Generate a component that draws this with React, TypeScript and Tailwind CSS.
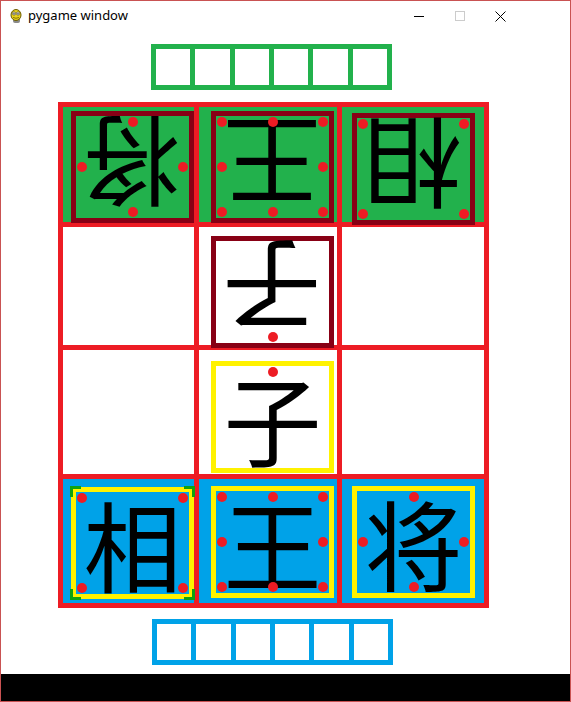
import React from "react";

type Dot = "tl" | "tc" | "tr" | "ml" | "mr" | "bl" | "bc" | "br";

const dotPos: Record<Dot, string> = {
  tl: "top-[1px] left-[1px]",
  tc: "top-[1px] left-1/2 -translate-x-1/2",
  tr: "top-[1px] right-[1px]",
  ml: "top-1/2 -translate-y-1/2 left-[1px]",
  mr: "top-1/2 -translate-y-1/2 right-[1px]",
  bl: "bottom-[1px] left-[1px]",
  bc: "bottom-[1px] left-1/2 -translate-x-1/2",
  br: "bottom-[1px] right-[1px]",
};

const KING: Dot[] = ["tl", "tc", "tr", "ml", "mr", "bl", "bc", "br"];
const BISHOP: Dot[] = ["tl", "tr", "bl", "br"];
const ROOK: Dot[] = ["tc", "ml", "mr", "bc"];

type PieceProps = {
  char: string;
  flipped?: boolean;
  frame: string;
  dots: Dot[];
  offset: string;
  selected?: boolean;
};

const Piece = ({ char, flipped, frame, dots, offset, selected }: PieceProps) => (
  <div className={`relative w-[123px] h-[112px] border-[5px] flex items-center justify-center ${frame} ${offset}`}>
    <span
      className={`text-[98px] leading-[0.85] text-black font-normal ${flipped ? "rotate-180" : ""}`}
      style={{ fontFamily: '"Noto Sans CJK SC", "Noto Sans CJK JP", sans-serif' }}
    >
      {char}
    </span>
    {dots.map((d) => (
      <span key={d} className={`absolute w-[10px] h-[10px] rounded-full bg-[#ed1c24] ${dotPos[d]}`} />
    ))}
    {selected && (
      <>
        <span className="absolute -top-[6px] -left-[6px] w-[11px] h-[11px] border-t-[3px] border-l-[3px] border-[#0fa30f]" />
        <span className="absolute -top-[6px] -right-[6px] w-[11px] h-[11px] border-t-[3px] border-r-[3px] border-[#0fa30f]" />
        <span className="absolute -bottom-[6px] -left-[6px] w-[11px] h-[11px] border-b-[3px] border-l-[3px] border-[#0fa30f]" />
        <span className="absolute -bottom-[6px] -right-[6px] w-[11px] h-[11px] border-b-[3px] border-r-[3px] border-[#0fa30f]" />
      </>
    )}
  </div>
);

const Tray = ({ color, className }: { color: string; className: string }) => (
  <div className={`flex gap-[5px] p-[5px] w-[241px] h-[46px] ${color} ${className}`}>
    {[0, 1, 2, 3, 4, 5].map((i) => (
      <div key={i} className="flex-1 bg-white" />
    ))}
  </div>
);

const PygameIcon = () => (
  <svg width="16" height="16" viewBox="0 0 16 16">
    <rect x="5" y="9" width="7" height="6" rx="2" fill="#8a8a8a" />
    <ellipse cx="8" cy="7" rx="5" ry="5.5" fill="#e8d21a" stroke="#6b5b00" strokeWidth="1" />
    <circle cx="6" cy="5.5" r="1.6" fill="#fff" stroke="#333" strokeWidth="0.6" />
    <circle cx="10" cy="5.5" r="1.6" fill="#fff" stroke="#333" strokeWidth="0.6" />
    <circle cx="6" cy="5.7" r="0.6" fill="#000" />
    <circle cx="10" cy="5.7" r="0.6" fill="#000" />
    <path d="M5 9.5 Q8 11 11 9.5" stroke="#6b5b00" strokeWidth="0.8" fill="none" />
  </svg>
);

const TitleBar = () => (
  <div className="flex items-center h-[30px] bg-white shrink-0">
    <div className="ml-[7px] mr-[4px] flex items-center">
      <PygameIcon />
    </div>
    <span className="text-[13px] text-black" style={{ fontFamily: '"Noto Sans", "Liberation Sans", sans-serif' }}>
      pygame window
    </span>
    <div className="ml-auto flex items-center h-full">
      <div className="w-[41px] h-full flex items-center justify-center">
        <div className="w-[10px] h-px bg-black" />
      </div>
      <div className="w-[41px] h-full flex items-center justify-center">
        <div className="w-[10px] h-[10px] border border-[#cccccc]" />
      </div>
      <div className="w-[41px] h-full flex items-center justify-center">
        <svg width="11" height="11" viewBox="0 0 11 11">
          <path d="M0.5 0.5 L10.5 10.5 M10.5 0.5 L0.5 10.5" stroke="#000" strokeWidth="1" />
        </svg>
      </div>
      <div className="w-[49px]" />
    </div>
  </div>
);

export default function App() {
  return (
    <div className="w-[571px] h-[702px] border border-[#c95252] flex flex-col bg-white overflow-hidden">
      <TitleBar />
      <div className="flex-1 flex flex-col">
        <Tray color="bg-[#22b14c]" className="mt-[13px] ml-[150px]" />

        <div className="mt-[12px] ml-[57px] w-[431px] grid grid-cols-[131px_138px_142px] grid-rows-[115px_118px_124px_124px] gap-[5px] p-[5px] bg-[#ed1c24]">
          <div className="bg-[#22b14c]">
            <Piece char="将" flipped frame="border-[#880015]" dots={ROOK} offset="ml-[8px] mt-[4px]" />
          </div>
          <div className="bg-[#22b14c]">
            <Piece char="王" flipped frame="border-[#880015]" dots={KING} offset="ml-[12px] mt-[4px]" />
          </div>
          <div className="bg-[#22b14c]">
            <Piece char="相" flipped frame="border-[#880015]" dots={BISHOP} offset="ml-[10px] mt-[6px]" />
          </div>

          <div className="bg-white" />
          <div className="bg-white">
            <Piece char="子" flipped frame="border-[#880015]" dots={["bc"]} offset="ml-[12px] mt-[9px]" />
          </div>
          <div className="bg-white" />

          <div className="bg-white" />
          <div className="bg-white">
            <Piece char="子" frame="border-[#fff200]" dots={["tc"]} offset="ml-[12px] mt-[11px]" />
          </div>
          <div className="bg-white" />

          <div className="bg-[#00a2e8]">
            <Piece char="相" frame="border-[#fff200]" dots={BISHOP} offset="ml-[8px] mt-[8px]" selected />
          </div>
          <div className="bg-[#00a2e8]">
            <Piece char="王" frame="border-[#fff200]" dots={KING} offset="ml-[12px] mt-[7px]" />
          </div>
          <div className="bg-[#00a2e8]">
            <Piece char="将" frame="border-[#fff200]" dots={ROOK} offset="ml-[10px] mt-[7px]" />
          </div>
        </div>

        <Tray color="bg-[#00a2e8]" className="mt-[11px] ml-[151px]" />

        <div className="mt-auto h-[27px] bg-black" />
      </div>
    </div>
  );
}
